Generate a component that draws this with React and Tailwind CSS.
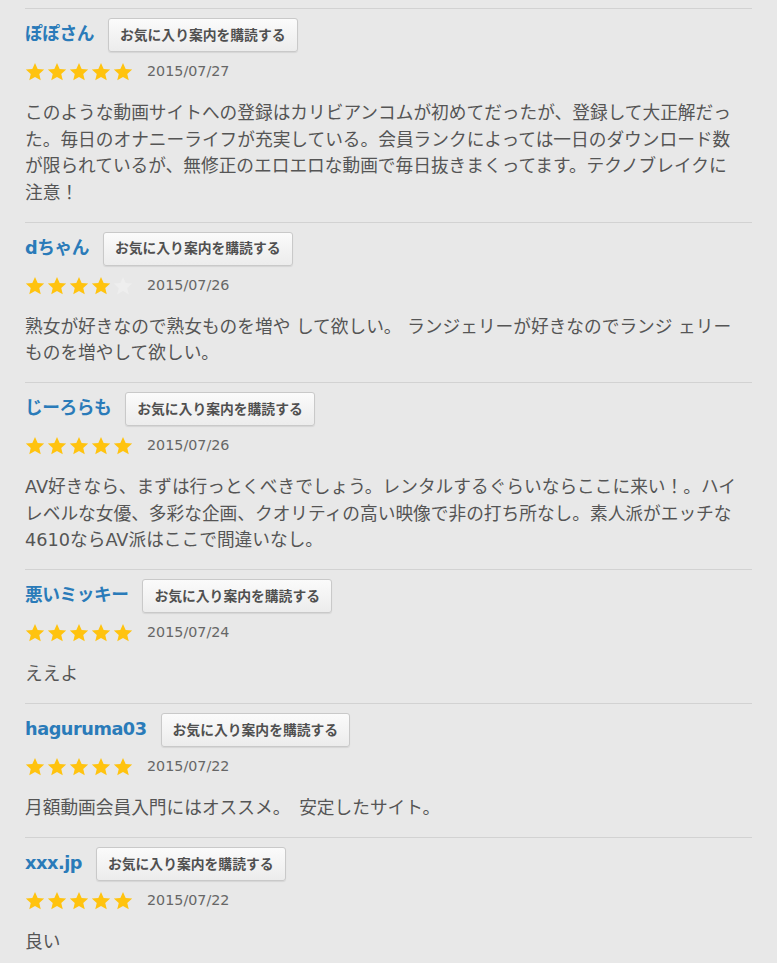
import React from 'react'

// Review list — each entry: reviewer name + subscribe button, star rating + date, body text.
const reviews = [
  {
    name: 'ぽぽさん',
    rating: 5,
    date: '2015/07/27',
    body: 'このような動画サイトへの登録はカリビアンコムが初めてだったが、登録して大正解だった。毎日のオナニーライフが充実している。会員ランクによっては一日のダウンロード数が限られているが、無修正のエロエロな動画で毎日抜きまくってます。テクノブレイクに注意！',
  },
  {
    name: 'dちゃん',
    rating: 4,
    date: '2015/07/26',
    body: '熟女が好きなので熟女ものを増や して欲しい。 ランジェリーが好きなのでランジ ェリーものを増やして欲しい。',
  },
  {
    name: 'じーろらも',
    rating: 5,
    date: '2015/07/26',
    body: 'AV好きなら、まずは行っとくべきでしょう。レンタルするぐらいならここに来い！。ハイレベルな女優、多彩な企画、クオリティの高い映像で非の打ち所なし。素人派がエッチな4610ならAV派はここで間違いなし。',
  },
  { name: '悪いミッキー', rating: 5, date: '2015/07/24', body: 'ええよ' },
  { name: 'haguruma03', rating: 5, date: '2015/07/22', body: '月額動画会員入門にはオススメ。　安定したサイト。' },
  { name: 'xxx.jp', rating: 5, date: '2015/07/22', body: '良い' },
]

function Star({ filled }) {
  return (
    <svg width="20" height="20" viewBox="0 0 24 24" aria-hidden="true">
      <path
        d="M12 1.2 L15.2 8.4 L23 9.1 L17.1 14.3 L18.9 22 L12 17.9 L5.1 22 L6.9 14.3 L1 9.1 L8.8 8.4 Z"
        fill={filled ? '#ffc30f' : '#eeeeee'}
      />
    </svg>
  )
}

function Review({ name, rating, date, body }) {
  return (
    <div className="border-t border-[#d2d2d2] pt-[9px] pb-[15.5px]">
      <div className="flex items-center gap-[14px]">
        <span className="text-[17.7px] font-bold tracking-[-0.45px] text-[#2a7bb9] leading-none">{name}</span>
        <button className="h-[34px] px-[11px] rounded-[3px] border border-[#c9c9c9] bg-gradient-to-b from-[#fbfbfb] to-[#ececec] shadow-[0_1px_1px_rgba(0,0,0,0.08)] text-[13.8px] font-bold text-[#505050]">
          お気に入り案内を購読する
        </button>
      </div>
      <div className="mt-[10px] flex h-[20px] items-center">
        <div className="flex gap-[2px]">
          {[1, 2, 3, 4, 5].map(i => (
            <Star key={i} filled={i <= rating} />
          ))}
        </div>
        <span className="ml-[14px] text-[14.3px] text-[#666]">{date}</span>
      </div>
      <p className="mt-[18px] pr-[12px] text-[17.7px] leading-[26.5px] text-[#555]">{body}</p>
    </div>
  )
}

export default function App() {
  return (
    <div
      className="min-h-screen bg-[#e8e8e8] pt-[8px]"
      style={{ fontFamily: '"DejaVu Sans", "Noto Sans CJK JP", sans-serif' }}
    >
      <div className="ml-[25px] w-[727px]">
        {reviews.map(r => (
          <Review key={r.name} {...r} />
        ))}
      </div>
    </div>
  )
}
